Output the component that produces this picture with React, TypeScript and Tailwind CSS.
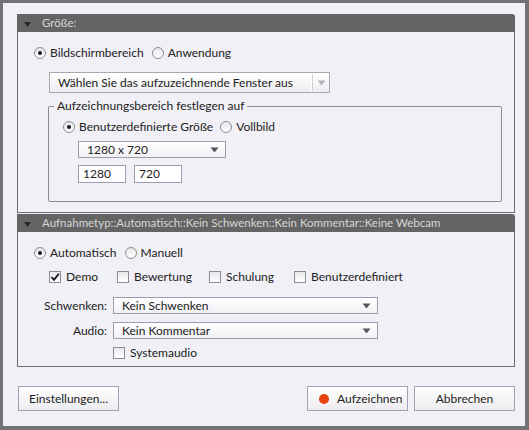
import React from 'react';

const font = { fontFamily: 'Lato, "Noto Sans", sans-serif' };

function Radio({ checked, label }: { checked?: boolean; label: string }) {
  return (
    <div className="flex items-center gap-[4px]">
      <span className="w-[12px] h-[12px] rounded-full border border-[#8c8c94] bg-gradient-to-b from-[#e6e6ea] to-white flex items-center justify-center">
        {checked && <span className="w-[4px] h-[4px] rounded-full bg-[#1a1a1a]" />}
      </span>
      <span>{label}</span>
    </div>
  );
}

function Check({ checked, label }: { checked?: boolean; label: string }) {
  return (
    <div className="flex items-center gap-[5px]">
      <span className="w-[12px] h-[12px] border border-[#8c8c94] bg-gradient-to-b from-[#e8e8ec] to-white flex items-center justify-center">
        {checked && (
          <svg width="10" height="10" viewBox="0 0 10 10">
            <path d="M1.5 5 L4 7.8 L8.8 1.8" fill="none" stroke="#111" strokeWidth="1.8" />
          </svg>
        )}
      </span>
      <span>{label}</span>
    </div>
  );
}

function Arrow({ color = '#55555f' }: { color?: string }) {
  return (
    <svg width="9" height="6" viewBox="0 0 9 6">
      <path d="M0.5 0.5 L8.5 0.5 L4.5 5.5 Z" fill={color} />
    </svg>
  );
}

function Select({ label, className }: { label: string; className: string }) {
  return (
    <div
      className={`flex items-center justify-between border border-[#9c9cac] bg-gradient-to-b from-white to-[#f1f1f5] pl-[8px] pr-[6px] whitespace-nowrap ${className}`}
    >
      <span>{label}</span>
      <Arrow />
    </div>
  );
}

function PanelHeader({ title }: { title: string }) {
  return (
    <div className="h-[18px] shrink-0 bg-[#646464] rounded-tr-[3px] flex items-center text-[#d6d6d6] text-[11.5px] whitespace-nowrap">
      <svg width="7" height="5" viewBox="0 0 7 5" className="ml-[7px] mt-[2px]">
        <path d="M0 0 L7 0 L3.5 5 Z" fill="#262626" />
      </svg>
      <span className="ml-[11px]">{title}</span>
    </div>
  );
}

function Button({ children, className }: { children: React.ReactNode; className: string }) {
  return (
    <div
      className={`h-[25px] border border-[#a2a2b2] bg-gradient-to-b from-white to-[#ececf0] flex items-center ${className}`}
    >
      {children}
    </div>
  );
}

export default function App() {
  return (
    <div
      className="w-[529px] h-[430px] bg-[#757075] pt-[3px] pl-[3px] pr-[4px] pb-[4px] text-[12px] leading-[14px] text-[#222]"
      style={font}
    >
      <div className="h-full bg-[#f0f0f6] pt-[11px] pl-[14px] pr-[10px] flex flex-col">
        {/* Größe */}
        <div className="h-[199px] shrink-0 flex flex-col">
          <PanelHeader title="Größe:" />
          <div className="flex-1 border border-t-0 border-[#6e6e72] pl-[16px] flex flex-col">
            <div className="mt-[14px] flex items-center gap-[8px]">
              <Radio checked label="Bildschirmbereich" />
              <Radio label="Anwendung" />
            </div>
            <div className="mt-[12px] ml-[15px] w-[281px] h-[21px] border border-[#a8a8b0] bg-gradient-to-b from-white to-[#ededf0] flex items-center pl-[8px] whitespace-nowrap">
              <span className="flex-1">Wählen Sie das aufzuzeichnende Fenster aus</span>
              <span className="h-[17px] border-l border-[#d0d0d6] shadow-[-1px_0_0_#ffffff] w-[17px] flex items-center justify-center ml-[4px]">
                <Arrow color="#b4b4bc" />
              </span>
            </div>
            {/* group box */}
            <div className="mt-[13px] ml-[14px] w-[454px] h-[96px] border border-[#8c8c90] rounded-[2px] relative pl-[14px]">
              <span className="absolute -top-[8px] left-[5px] bg-[#f0f0f6] px-[3px] whitespace-nowrap">
                Aufzeichnungsbereich festlegen auf
              </span>
              <div className="mt-[13px] flex items-center gap-[7px]">
                <Radio checked label="Benutzerdefinierte Größe" />
                <Radio label="Vollbild" />
              </div>
              <Select label="1280 x 720" className="mt-[7px] ml-[15px] w-[148px] h-[17px]" />
              <div className="mt-[7px] ml-[15px] flex gap-[8px]">
                <div className="w-[48px] h-[18px] border border-[#9c9cac] bg-white pl-[4px] flex items-center">1280</div>
                <div className="w-[48px] h-[18px] border border-[#9c9cac] bg-white pl-[4px] flex items-center">720</div>
              </div>
            </div>
          </div>
        </div>

        {/* Aufnahmetyp */}
        <div className="mt-[1px] h-[153px] shrink-0 flex flex-col">
          <PanelHeader title="Aufnahmetyp::Automatisch::Kein Schwenken::Kein Kommentar::Keine Webcam" />
          <div className="flex-1 border border-t-0 border-[#6e6e72] pl-[16px] flex flex-col">
            <div className="mt-[14px] flex items-center gap-[8px]">
              <Radio checked label="Automatisch" />
              <Radio label="Manuell" />
            </div>
            <div className="mt-[10px] ml-[15px] flex items-center">
              <div className="w-[68px]"><Check checked label="Demo" /></div>
              <div className="w-[92px]"><Check label="Bewertung" /></div>
              <div className="w-[85px]"><Check label="Schulung" /></div>
              <Check label="Benutzerdefiniert" />
            </div>
            <div className="mt-[13px] flex items-center">
              <span className="w-[73px] text-right">Schwenken:</span>
              <Select label="Kein Schwenken" className="ml-[6px] w-[265px] h-[17px]" />
            </div>
            <div className="mt-[8px] flex items-center">
              <span className="w-[73px] text-right">Audio:</span>
              <Select label="Kein Kommentar" className="ml-[6px] w-[265px] h-[17px]" />
            </div>
            <div className="mt-[7px] ml-[79px]">
              <Check label="Systemaudio" />
            </div>
          </div>
        </div>

        {/* buttons */}
        <div className="mt-[19px] flex items-center">
          <Button className="ml-[1px] w-[101px] justify-center">Einstellungen...</Button>
          <div className="flex-1" />
          <Button className="w-[101px] gap-[8px] pl-[11px]">
            <span className="w-[10px] h-[10px] rounded-full bg-[#e8420e]" />
            <span>Aufzeichnen</span>
          </Button>
          <Button className="ml-[6px] w-[101px] justify-center">Abbrechen</Button>
        </div>
      </div>
    </div>
  );
}
